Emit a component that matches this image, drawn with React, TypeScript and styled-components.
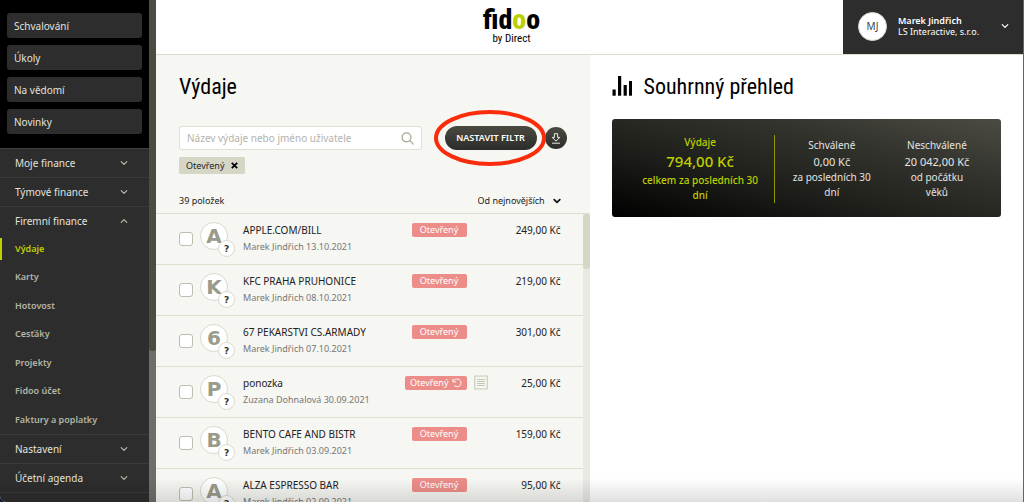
import React from "react";
import styled, { createGlobalStyle } from "styled-components";

const GlobalStyle = createGlobalStyle`
  * { box-sizing: border-box; }
  body {
    margin: 0;
    background: linear-gradient(to right, #0b1a2c, #5c6384);
    color: #222;
    font-family: "Noto Sans", "Open Sans", sans-serif;
    font-size: 10px;
    line-height: 16px;
  }
  button, input, select { font: inherit; color: inherit; }
  button { border: 0; padding: 0; background: none; cursor: pointer; }
  ul { list-style: none; margin: 0; padding: 0; }
  h1, h2, p { margin: 0; }
  svg { display: block; flex: none; }
`;

const display = `"Liberation Sans Narrow", "Roboto Condensed", "DejaVu Sans Condensed", Roboto, sans-serif`;

const Shell = styled.div`
  display: flex;
  height: 100vh;
  margin-right: 1px;
  overflow: hidden;
  position: relative;
  border-radius: 0 0 0 6px;
  background: #fff;
`;

const Sidebar = styled.aside`
  display: flex;
  flex: none;
  width: 156px;
  background: #2d2d2d;
  color: #e2e2de;
`;

const SidebarContent = styled.div`
  flex: 1;
  min-width: 0;
  overflow: hidden;
`;

const SidebarTrack = styled.div`
  width: 7px;
  background: #6e6e69;
`;

const SidebarThumb = styled.div`
  height: 70%;
  background: #4d4c43;
  border-radius: 0 0 3px 3px;
`;

const QuickLinks = styled.div`
  display: grid;
  gap: 7px;
  padding: 13px 7px 14px;
  background: #000;
`;

const QuickLink = styled.button`
  height: 25px;
  padding: 0 7px;
  border-radius: 3px;
  background: #2d2d2d;
  text-align: left;
`;

const Nav = styled.nav`
  border-top: 1px solid #41413a;
`;

const NavGroup = styled.button<{ $open?: boolean }>`
  display: flex;
  align-items: center;
  justify-content: space-between;
  width: 100%;
  height: ${(p) => (p.$open ? 28 : 29)}px;
  padding: 0 21px 0 15px;
  border-bottom: ${(p) => (p.$open ? "0" : "1px solid #3c3c36")};
  color: #e2e2de;
`;

const SubNav = styled.ul`
  display: grid;
  grid-auto-rows: 1fr;
  height: 200px;
  border-bottom: 1px solid #3c3c36;
`;

const SubLink = styled.a<{ $active?: boolean }>`
  display: flex;
  align-items: center;
  height: 22px;
  margin: 3px 0;
  padding-left: 13px;
  border-left: 2px solid ${(p) => (p.$active ? "#bed000" : "transparent")};
  color: ${(p) => (p.$active ? "#bed000" : "#b5b5a4")};
  font-size: 9px;
  font-weight: 600;
  text-decoration: none;
`;

const Page = styled.div`
  display: flex;
  flex: 1;
  flex-direction: column;
  min-width: 0;
`;

const Header = styled.header`
  display: flex;
  height: 55px;
  flex: none;
  border-bottom: 1px solid #dcdccd;
`;

const Brand = styled.div`
  flex: 1;
  padding: 6px 0 0 24px;
  color: #000;
  font-family: ${display};
  text-align: center;
`;

const BrandName = styled.div`
  font-size: 28px;
  font-weight: 800;
  line-height: 27px;
`;

const BrandAccent = styled.span`
  color: #bccf00;
`;

const BrandBy = styled.div`
  font-size: 11px;
  line-height: 12px;
`;

const Profile = styled.button`
  display: flex;
  align-items: center;
  gap: 11px;
  width: 180px;
  height: 54px;
  padding: 0 14px 2px 15px;
  background: #2d2d2d;
  color: #fff;
  font-size: 9px;
  line-height: 11px;
  text-align: left;
`;

const ProfileAvatar = styled.span`
  display: grid;
  place-items: center;
  width: 29px;
  height: 29px;
  border: 1px solid #d9d9cc;
  border-radius: 50%;
  background: #fff;
  color: #444;
  font-size: 10px;
`;

const ProfileText = styled.span`
  flex: 1;
  white-space: nowrap;
`;

const ProfileName = styled.strong`
  display: block;
  font-weight: 600;
`;

const Columns = styled.main`
  display: grid;
  grid-template-columns: 1fr 1fr;
  flex: 1;
  min-height: 0;
`;

const Expenses = styled.section`
  display: flex;
  flex-direction: column;
  min-height: 0;
  min-width: 0;
  background: #f6f6f2;
`;

const Title = styled.h1`
  display: flex;
  align-items: center;
  gap: 12px;
  color: #000;
  font-family: ${display};
  font-size: 22px;
  font-weight: 400;
  line-height: 28px;
`;

const ExpensesHead = styled.div`
  padding: 18px 23px 0;
`;

const Toolbar = styled.div`
  display: flex;
  align-items: center;
  margin-top: 25px;
`;

const SearchBox = styled.label`
  display: flex;
  align-items: center;
  flex: 1;
  height: 24px;
  min-width: 0;
  margin-right: 23px;
  padding: 0 7px;
  border: 1px solid #e0e0d2;
  border-radius: 3px;
  background: #fff;
`;

const SearchInput = styled.input`
  flex: 1;
  min-width: 0;
  padding: 0;
  border: 0;
  outline: 0;
  background: none;
  &::placeholder { color: #b3b3ad; opacity: 1; }
`;

const FilterWrap = styled.div`
  position: relative;
  display: flex;
  margin-right: 8px;
`;

const FilterButton = styled.button`
  width: 92px;
  height: 24px;
  border-radius: 12px;
  background: linear-gradient(#4b4a41, #2c2c2a);
  color: #fff;
  font-size: 9px;
  font-weight: 600;
  white-space: nowrap;
`;

const Highlight = styled.svg`
  position: absolute;
  left: -12px;
  top: -17px;
  z-index: 1;
  pointer-events: none;
`;

const RoundButton = styled.button`
  display: grid;
  place-items: center;
  width: 22px;
  height: 22px;
  border-radius: 50%;
  background: linear-gradient(#4b4a41, #2c2c2a);
`;

const Chip = styled.button`
  display: flex;
  align-items: center;
  gap: 6px;
  height: 17px;
  margin-top: 7px;
  padding: 0 7px;
  border-radius: 2px;
  background: #d6d6c6;
  font-size: 9px;
`;

const ListBar = styled.div`
  display: flex;
  align-items: center;
  justify-content: space-between;
  height: 39px;
  padding: 14px 6px 0 0;
  font-size: 9px;
`;

const SortBox = styled.label`
  display: flex;
  align-items: center;
  gap: 7px;
`;

const SortSelect = styled.select`
  appearance: none;
  padding: 0;
  border: 0;
  background: none;
`;

const ListArea = styled.div`
  display: flex;
  flex: 1;
  min-height: 0;
  overflow: hidden;
  border-top: 1px solid #dedecf;
`;

const Rows = styled.ul`
  flex: 1;
  min-width: 0;
`;

const ListTrack = styled.div`
  width: 7px;
  background: #e9e8e3;
`;

const ListThumb = styled.div`
  height: 55px;
  border-radius: 3px;
  background: #d6d6c6;
`;

const Row = styled.li`
  display: flex;
  height: 51px;
  padding: 8px 22px 0 23px;
  border-bottom: 1px solid #dedecf;
`;

const Check = styled.input`
  appearance: none;
  width: 14px;
  height: 14px;
  margin: 10px 7px 0 0;
  border: 1px solid #bdbdb0;
  border-radius: 3px;
  background: #fff;
`;

const Avatar = styled.div`
  position: relative;
  display: grid;
  place-items: center;
  width: 28px;
  height: 28px;
  margin-right: 15px;
  border: 1px solid #d9d9ca;
  border-radius: 50%;
  background: #fff;
  color: #9a9b8a;
  font-family: "DejaVu Sans", sans-serif;
  font-size: 20px;
  font-weight: 700;
  line-height: 24px;
`;

const AvatarBadge = styled.span`
  position: absolute;
  right: -8px;
  bottom: -8px;
  display: grid;
  place-items: center;
  width: 17px;
  height: 17px;
  border: 1px solid #d9d9ca;
  border-radius: 50%;
  background: #fff;
  color: #333;
  font-size: 9px;
  line-height: 12px;
`;

const RowText = styled.div`
  flex: 1;
  min-width: 0;
  white-space: nowrap;
`;

const RowName = styled.p`
  line-height: 16px;
`;

const RowMeta = styled.p`
  color: #777;
  font-size: 9px;
  line-height: 18px;
`;

const Status = styled.span`
  display: flex;
  align-items: center;
  justify-content: center;
  gap: 3px;
  height: 14px;
  min-width: 55px;
  margin-top: 1px;
  padding: 0 5px;
  border-radius: 2px;
  background: #ec8d89;
  color: #fff;
  font-size: 9px;
`;

const ReceiptSlot = styled.span`
  width: 22px;
  padding-left: 7px;
`;

const Price = styled.span`
  width: 72px;
  text-align: right;
  white-space: nowrap;
`;

const Overview = styled.section`
  min-width: 0;
  padding: 18px 22px 0;
`;

const SummaryCard = styled.div`
  display: grid;
  grid-template-columns: 148fr 114fr 96fr;
  align-items: center;
  height: 98px;
  margin-top: 18px;
  padding: 1px 16px 0 15px;
  border-radius: 3px;
  background: linear-gradient(to top right, #000 0%, #1d1d19 35%, #34342f 70%, #4c4b42 100%);
`;

const Metric = styled.div<{ $main?: boolean }>`
  padding: ${(p) => (p.$main ? "0 14px" : "0 12px")};
  border-right: ${(p) => (p.$main ? "1px solid #8b9800" : "0")};
  color: ${(p) => (p.$main ? "#bed000" : "#e4e4e0")};
  font-weight: ${(p) => (p.$main ? 500 : 400)};
  line-height: 15px;
  text-align: center;
`;

const MetricValue = styled.p<{ $main?: boolean }>`
  font-size: ${(p) => (p.$main ? 15 : 11)}px;
  line-height: ${(p) => (p.$main ? 23 : 17)}px;
  white-space: nowrap;
`;

const BottomFade = styled.div`
  position: absolute;
  inset: auto 0 0 0;
  height: 24px;
  background: linear-gradient(transparent, rgba(0, 0, 0, 0.12));
  pointer-events: none;
`;

const Chevron = ({ up = false, color = "#b9b9a8", strong = false }: { up?: boolean; color?: string; strong?: boolean }) => (
  <svg width="8" height="8" viewBox="0 0 8 8" fill="none" stroke={color} strokeWidth={strong ? 1.7 : 1.2} strokeLinecap="round" strokeLinejoin="round">
    <path d={up ? "M1.2 5.4 4 2.6l2.8 2.8" : "M1.2 2.6 4 5.4l2.8-2.8"} />
  </svg>
);

const SearchIcon = () => (
  <svg width="13" height="13" viewBox="0 0 13 13" fill="none" stroke="#a5a592" strokeWidth="1.2" strokeLinecap="round">
    <circle cx="5.5" cy="5.3" r="4.5" />
    <path d="m8.9 8.6 3.4 3.5" />
  </svg>
);

const DownloadIcon = () => (
  <svg width="10" height="11" viewBox="0 0 10 11" fill="none" stroke="#fff" strokeWidth="0.9" strokeLinejoin="round">
    <path d="M3.4.7h3.2v3.7h2.2L5 8.2 1.2 4.4h2.2z" />
    <path d="M1 10.2h8" />
  </svg>
);

const UndoIcon = () => (
  <svg width="10" height="10" viewBox="0 0 10 10" fill="none" stroke="#fff" strokeWidth="0.9" strokeLinecap="round" strokeLinejoin="round">
    <path d="M.9 1.1v2.8h2.9" />
    <path d="M1.1 3.7C2 1.9 3.5 1 5.2 1a3.9 3.9 0 1 1-2.7 6.8" />
  </svg>
);

const ReceiptIcon = () => (
  <svg width="14" height="15" viewBox="0 0 14 15" fill="none" stroke="#c5c5b3" strokeWidth="1">
    <path d="M.8 1.1 2 .6l1.3.9L4.6.6l1.2.9L7 .6l1.3.9L9.5.6l1.2.9L12 .6l1.2.5v12.8l-1.2.5-1.3-.9-1.2.9-1.2-.9-1.3.9-1.2-.9-1.2.9-1.3-.9-1.3.9-1.2-.5z" />
    <path d="M3.2 4.5h7.6M3.2 6.5h7.6M3.2 8.5h7.6M3.2 10.5h7.6" />
  </svg>
);

const BarsIcon = () => (
  <svg width="20" height="22" viewBox="0 0 20 22" fill="#000">
    <rect x="0.5" y="13.5" width="3.2" height="6.2" />
    <rect x="6" y="0" width="3.2" height="19.7" />
    <rect x="11.6" y="9" width="3.2" height="10.7" />
    <rect x="17" y="5" width="3" height="14.7" />
  </svg>
);

const quickLinks = ["Schvalování", "Úkoly", "Na vědomí", "Novinky"];
const companyLinks = ["Výdaje", "Karty", "Hotovost", "Cesťáky", "Projekty", "Fidoo účet", "Faktury a poplatky"];

const expenses = [
  { name: "APPLE.COM/BILL", meta: "Marek Jindřich 13.10.2021", price: "249,00 Kč", letter: "A" },
  { name: "KFC PRAHA PRUHONICE", meta: "Marek Jindřich 08.10.2021", price: "219,00 Kč", letter: "K" },
  { name: "67 PEKARSTVI CS.ARMADY", meta: "Marek Jindřich 07.10.2021", price: "301,00 Kč", letter: "6" },
  { name: "ponozka", meta: "Zuzana Dohnalová 30.09.2021", price: "25,00 Kč", letter: "P", returned: true },
  { name: "BENTO CAFE AND BISTR", meta: "Marek Jindřich 03.09.2021", price: "159,00 Kč", letter: "B" },
  { name: "ALZA ESPRESSO BAR", meta: "Marek Jindřich 02.09.2021", price: "95,00 Kč", letter: "A" },
];

export default function App() {
  return (
    <Shell>
      <GlobalStyle />
      <Sidebar>
        <SidebarContent>
          <QuickLinks>
            {quickLinks.map((label) => (
              <QuickLink key={label}>{label}</QuickLink>
            ))}
          </QuickLinks>
          <Nav>
            <NavGroup>Moje finance<Chevron /></NavGroup>
            <NavGroup>Týmové finance<Chevron /></NavGroup>
            <NavGroup $open aria-expanded="true">Firemní finance<Chevron up /></NavGroup>
            <SubNav>
              {companyLinks.map((label, i) => (
                <li key={label}>
                  <SubLink href="#" $active={i === 0}>{label}</SubLink>
                </li>
              ))}
            </SubNav>
            <NavGroup>Nastavení<Chevron /></NavGroup>
            <NavGroup>Účetní agenda<Chevron /></NavGroup>
          </Nav>
        </SidebarContent>
        <SidebarTrack><SidebarThumb /></SidebarTrack>
      </Sidebar>

      <Page>
        <Header>
          <Brand>
            <BrandName>fid<BrandAccent>o</BrandAccent>o</BrandName>
            <BrandBy>by Direct</BrandBy>
          </Brand>
          <Profile>
            <ProfileAvatar>MJ</ProfileAvatar>
            <ProfileText>
              <ProfileName>Marek Jindřich</ProfileName>
              LS Interactive, s.r.o.
            </ProfileText>
            <Chevron color="#fff" />
          </Profile>
        </Header>

        <Columns>
          <Expenses>
            <ExpensesHead>
              <Title>Výdaje</Title>
              <Toolbar>
                <SearchBox>
                  <SearchInput type="text" aria-label="Hledat" placeholder="Název výdaje nebo jméno uživatele" />
                  <SearchIcon />
                </SearchBox>
                <FilterWrap>
                  <FilterButton>NASTAVIT FILTR</FilterButton>
                  <Highlight width="114" height="58" viewBox="0 0 114 58" fill="none" stroke="#fb2c0b" strokeWidth="4">
                    <ellipse cx="57" cy="29" rx="54" ry="26" />
                  </Highlight>
                </FilterWrap>
                <RoundButton aria-label="Stáhnout"><DownloadIcon /></RoundButton>
              </Toolbar>
              <Chip>
                Otevřený
                <svg width="7" height="7" viewBox="0 0 7 7" stroke="#000" strokeWidth="1.8">
                  <path d="m.8.8 5.4 5.4M6.2.8.8 6.2" />
                </svg>
              </Chip>
              <ListBar>
                <span>39 položek</span>
                <SortBox>
                  <SortSelect aria-label="Řazení"><option>Od nejnovějších</option></SortSelect>
                  <Chevron color="#111" strong />
                </SortBox>
              </ListBar>
            </ExpensesHead>
            <ListArea>
              <Rows>
                {expenses.map((e) => (
                  <Row key={e.name}>
                    <Check type="checkbox" aria-label={e.name} />
                    <Avatar>{e.letter}<AvatarBadge>?</AvatarBadge></Avatar>
                    <RowText>
                      <RowName>{e.name}</RowName>
                      <RowMeta>{e.meta}</RowMeta>
                    </RowText>
                    <Status>Otevřený{e.returned && <UndoIcon />}</Status>
                    <ReceiptSlot>{e.returned && <ReceiptIcon />}</ReceiptSlot>
                    <Price>{e.price}</Price>
                  </Row>
                ))}
              </Rows>
              <ListTrack><ListThumb /></ListTrack>
            </ListArea>
          </Expenses>

          <Overview>
            <Title as="h2"><BarsIcon />Souhrnný přehled</Title>
            <SummaryCard>
              <Metric $main>
                Výdaje
                <MetricValue $main>794,00 Kč</MetricValue>
                celkem za posledních 30 dní
              </Metric>
              <Metric>
                Schválené
                <MetricValue>0,00 Kč</MetricValue>
                za posledních 30 dní
              </Metric>
              <Metric>
                Neschválené
                <MetricValue>20 042,00 Kč</MetricValue>
                od počátku věků
              </Metric>
            </SummaryCard>
          </Overview>
        </Columns>
      </Page>
      <BottomFade />
    </Shell>
  );
}
